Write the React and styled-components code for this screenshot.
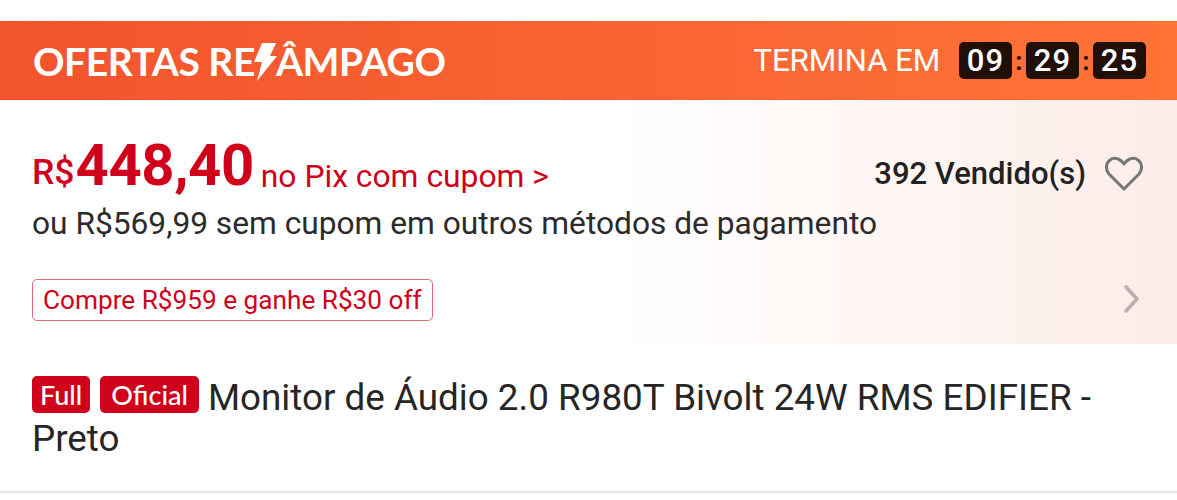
import React from 'react';
import styled, { createGlobalStyle } from 'styled-components';

const GlobalStyle = createGlobalStyle`
  html, body {
    margin: 0;
    padding: 0;
    background: #fff;
    font-family: Roboto, "Liberation Sans", sans-serif;
  }
`;

const Page = styled.div`
  width: 1177px;
  height: 493px;
  padding-top: 21px;
  box-sizing: border-box;
  border-bottom: 2px solid #e6e6e6;
  display: flex;
  flex-direction: column;
`;

const Banner = styled.header`
  height: 79px;
  flex-shrink: 0;
  display: flex;
  align-items: center;
  justify-content: space-between;
  padding: 0 31px 0 33px;
  background: linear-gradient(90deg, #f2542d 0%, #ff7337 100%);
`;

const Logo = styled.h1`
  margin: 0;
  display: flex;
  align-items: center;
  color: #fff;
  font-family: Lato, sans-serif;
  font-size: 39px;
  font-weight: 700;
  letter-spacing: -0.45px;
`;

const Bolt = styled.svg`
  width: 24px;
  height: 39px;
  margin: 2px -1px 0 -2px;
  fill: #fff;
`;

const Countdown = styled.div`
  display: flex;
  align-items: center;
  color: #fff;
`;

const EndsLabel = styled.span`
  font-size: 31.5px;
  margin-right: 19px;
  letter-spacing: -0.2px;
`;

const TimeBox = styled.span`
  width: 53px;
  height: 37px;
  display: flex;
  align-items: center;
  justify-content: center;
  border-radius: 5px;
  background: #221008;
  font-size: 31px;
  font-weight: 500;
  letter-spacing: 1.2px;
`;

const Colon = styled.span`
  width: 14px;
  text-align: center;
  color: #221008;
  font-size: 26px;
  font-weight: 700;
`;

const PriceSection = styled.section`
  height: 244px;
  flex-shrink: 0;
  box-sizing: border-box;
  padding: 30px 32px 0;
  background: linear-gradient(90deg, #fff 0%, #fff 53%, #fef5f2 78%, #fcece8 100%);
  display: flex;
  flex-direction: column;
`;

const PriceRow = styled.div`
  display: flex;
  align-items: center;
  justify-content: space-between;
  height: 70px;
`;

const PriceGroup = styled.div`
  color: #d0011b;
  white-space: nowrap;
`;

const Currency = styled.span`
  font-size: 35.5px;
  font-weight: 500;
  vertical-align: 1px;
`;

const Price = styled.span`
  margin-left: 1px;
  font-size: 58px;
  font-weight: 700;
  letter-spacing: -0.4px;
`;

const PixNote = styled.span`
  font-size: 31.8px;
  margin-left: 7px;
  vertical-align: -2px;
`;

const Sold = styled.div`
  display: flex;
  align-items: center;
  margin-top: 16px;
  color: #222;
  font-size: 31px;
  font-weight: 500;
`;

const HeartIcon = styled.svg`
  width: 40px;
  height: 36px;
  margin: 2px 1px 0 18px;
  fill: none;
  stroke: #767676;
  stroke-width: 3;
`;

const AltPrice = styled.p`
  margin: 4px 0 0;
  color: #2b2b2b;
  font-size: 31.7px;
  line-height: 40px;
`;

const CouponRow = styled.div`
  margin-top: 35px;
  display: flex;
  align-items: center;
  justify-content: space-between;
`;

const CouponTag = styled.span`
  height: 42px;
  box-sizing: border-box;
  padding: 0 10px;
  display: flex;
  align-items: center;
  color: #d0011b;
  font-size: 26.2px;
  background: #fff;
  border: 1px solid #e36a78;
  border-radius: 5px;
`;

const Chevron = styled.svg`
  width: 18px;
  height: 30px;
  margin: 0 4px 2px 0;
  fill: none;
  stroke: #b9b0ae;
  stroke-width: 3.6;
  stroke-linecap: round;
  stroke-linejoin: round;
`;

const TitleSection = styled.section`
  padding: 32px 32px 0;
  color: #262626;
  font-size: 36.8px;
  line-height: 41px;
`;

const Badge = styled.span`
  display: inline-flex;
  align-items: center;
  justify-content: center;
  height: 37px;
  padding: 0 ${(p) => p.$pad}px;
  margin-right: 10px;
  vertical-align: 5px;
  border-radius: 5px;
  background: #d0011b;
  color: #fff;
  font-family: Lato, sans-serif;
  font-size: 27px;
  font-weight: 500;

  & + & {
    margin-right: 9px;
  }
`;

const App = () => (
  <>
    <GlobalStyle />
    <Page>
      <Banner>
        <Logo>
          OFERTAS RE
          <Bolt viewBox="0 0 24 39">
            <path d="M9 1h14l-6 13h7L4 39l5-19H1z" />
          </Bolt>
          ÂMPAGO
        </Logo>
        <Countdown>
          <EndsLabel>TERMINA EM</EndsLabel>
          <TimeBox>09</TimeBox>
          <Colon>:</Colon>
          <TimeBox>29</TimeBox>
          <Colon>:</Colon>
          <TimeBox>25</TimeBox>
        </Countdown>
      </Banner>
      <PriceSection>
        <PriceRow>
          <PriceGroup>
            <Currency>R$</Currency>
            <Price>448,40</Price>
            <PixNote>no Pix com cupom &gt;</PixNote>
          </PriceGroup>
          <Sold>
            392 Vendido(s)
            <HeartIcon viewBox="0 0 40 36">
              <path d="M20 33 5 18C1 13 2 7 6 4c4-3 10-2 14 4 4-6 10-7 14-4 4 3 5 9 1 14z" strokeLinejoin="round" />
            </HeartIcon>
          </Sold>
        </PriceRow>
        <AltPrice>ou R$569,99 sem cupom em outros métodos de pagamento</AltPrice>
        <CouponRow>
          <CouponTag>Compre R$959 e ganhe R$30 off</CouponTag>
          <Chevron viewBox="0 0 18 30">
            <path d="M3 3l11 12L3 27" />
          </Chevron>
        </CouponRow>
      </PriceSection>
      <TitleSection>
        <Badge $pad={8}>Full</Badge>
        <Badge $pad={11}>Oficial</Badge>
        Monitor de Áudio 2.0 R980T Bivolt 24W RMS EDIFIER - Preto
      </TitleSection>
    </Page>
  </>
);

export default App;
